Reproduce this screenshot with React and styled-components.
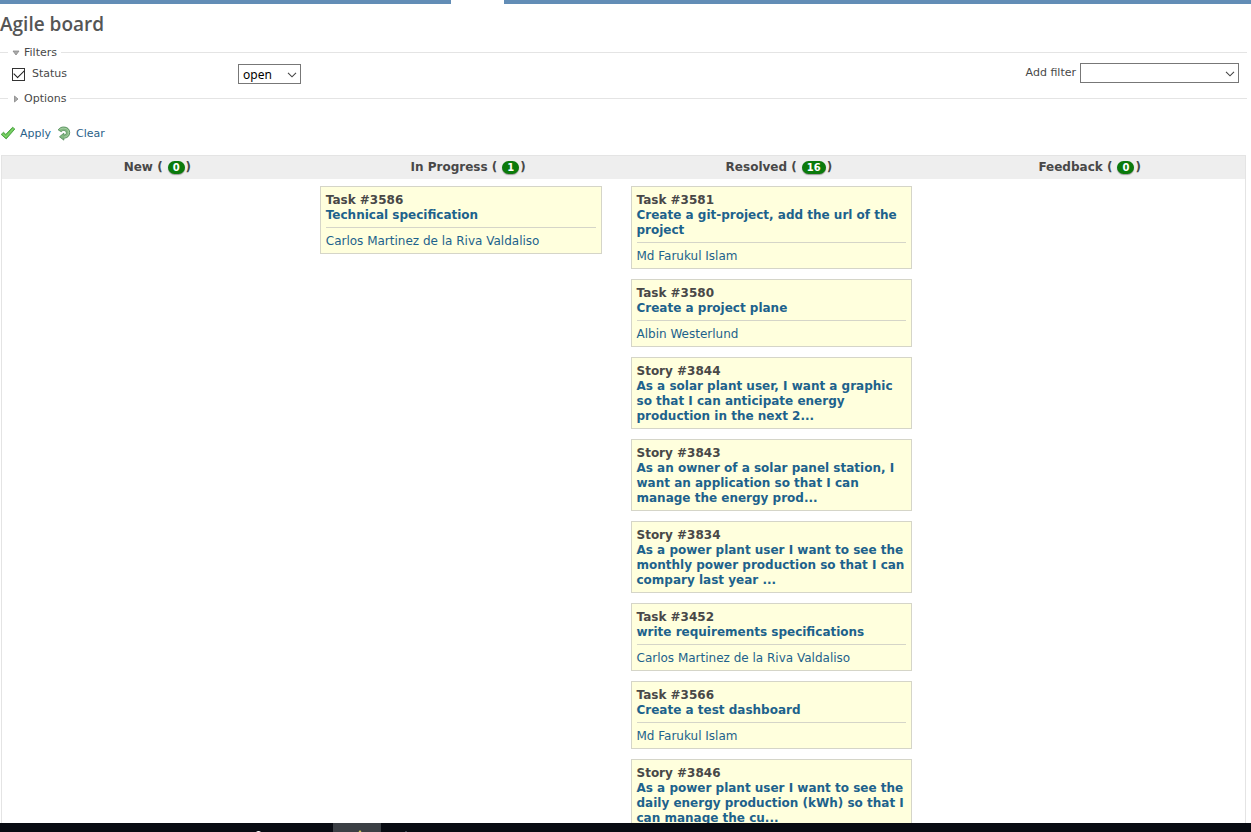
import React from "react";
import styled, { createGlobalStyle } from "styled-components";

const GlobalStyle = createGlobalStyle`
  * { box-sizing: border-box; }
  body {
    margin: 0;
    background: #fff;
    color: #484848;
    font-family: Verdana, "DejaVu Sans", sans-serif;
    font-size: 12px;
    line-height: 15px;
  }
`;

const Screen = styled.div`
  display: flex;
  flex-direction: column;
  height: 100vh;
  overflow: hidden;
`;

const TopStrip = styled.div`
  display: flex;
  flex: none;
  gap: 53px;
  height: 4px;
`;

const StripPart = styled.div`
  background: #628db6;
  flex: ${({ $fill }) => ($fill ? "1" : "0 0 451px")};
`;

const Content = styled.main`
  flex: 1;
  min-height: 0;
  overflow: hidden;
  padding: 8px 4px 0 0;
`;

const Title = styled.h1`
  margin: 0 0 9px;
  color: #555;
  font-family: "Trebuchet MS", "Open Sans", sans-serif;
  font-size: 19px;
  font-weight: 600;
  line-height: 24px;
`;

const Group = styled.fieldset`
  margin: 0;
  padding: 0 8px;
  border: 0;
  border-top: 1px solid #e4e4e4;
  min-width: 0;
  font-size: 11px;
`;

const Legend = styled.legend`
  padding: 0 4px 0 0;
`;

const Toggle = styled.button`
  display: flex;
  align-items: center;
  gap: 4px;
  padding: 1px 0 0 4px;
  border: 0;
  background: none;
  color: inherit;
  font: inherit;
  line-height: 14px;
`;

const FilterRow = styled.div`
  display: flex;
  align-items: center;
  height: 31px;
  padding: 0 0 3px 4px;
`;

const StatusLabel = styled.label`
  display: flex;
  align-items: center;
  gap: 7px;
  width: 226px;
  padding-bottom: 2px;
`;

const CheckBox = styled.input`
  appearance: none;
  width: 13px;
  height: 13px;
  margin: 2px 0 0;
  border: 1px solid #333;
  background: #fff;
  display: grid;
  place-items: center;

  &:checked::before {
    content: "";
    width: 9px;
    height: 5px;
    border: solid #222;
    border-width: 0 0 1px 1px;
    transform: rotate(-45deg) translate(1px, -1px);
  }
`;

const AddFilter = styled.div`
  display: flex;
  align-items: center;
  gap: 4px;
  margin-left: auto;
  padding-bottom: 2px;

  label { padding-bottom: 2px; }
`;

const SelectBox = styled.div`
  display: grid;
  align-items: center;
  width: ${({ $wide }) => ($wide ? "159px" : "63px")};

  & > * { grid-area: 1 / 1; }
  svg { justify-self: end; margin: 2px 4px 0 0; pointer-events: none; }
`;

const Select = styled.select`
  appearance: none;
  width: 100%;
  height: 20px;
  padding: 0 4px;
  border: 1px solid #777;
  border-radius: 0;
  background: #fff;
  color: #000;
  font-family: "Segoe UI", "Noto Sans", sans-serif;
  font-size: 12px;
`;

const Actions = styled.div`
  display: flex;
  gap: 5px;
  margin: 19px 0 14px;
  font-size: 11px;
`;

const ActionLink = styled.a`
  display: flex;
  align-items: center;
  gap: 4px;
  color: #2a5f88;
  text-decoration: none;
`;

const Board = styled.div`
  display: grid;
  grid-template-columns: repeat(4, 1fr);
  margin: 0 1px;
  border: 1px solid #e4e4e4;
`;

const Column = styled.section`
  min-width: 0;
`;

const ColumnHead = styled.h2`
  display: flex;
  align-items: center;
  justify-content: center;
  height: 23px;
  margin: 0 0 7px;
  background: #eee;
  font-size: 12px;
  line-height: 15px;
`;

const Count = styled.span`
  margin: 0 1px 0 5px;
  padding: 0 5px;
  border-radius: 7px;
  background: #0b7a0b;
  box-shadow: 0 1px 1px #999;
  color: #fff;
  font-size: 10px;
  line-height: 13px;
`;

const Cards = styled.div`
  display: grid;
  gap: 10px;
  padding: 0 22px 10px 7px;
`;

const Card = styled.article`
  padding: 6px 5px 4px;
  border: 1px solid #d5d5c8;
  background: #ffffdd;
  font-weight: bold;
`;

const CardLink = styled.a`
  display: block;
  color: #1d628c;
  text-decoration: none;
`;

const Assignee = styled.div`
  margin-top: 4px;
  padding-top: 6px;
  border-top: 1px solid #d5d5c8;
  font-weight: normal;
`;

const Taskbar = styled.footer`
  display: flex;
  flex: none;
  height: 9px;
  background: #080b12;

  svg { display: block; }
`;

const columns = [
  { name: "New", count: 0, cards: [] },
  {
    name: "In Progress",
    count: 1,
    cards: [["Task #3586", "Technical specification", "Carlos Martinez de la Riva Valdaliso"]],
  },
  {
    name: "Resolved",
    count: 16,
    cards: [
      ["Task #3581", "Create a git-project, add the url of the project", "Md Farukul Islam"],
      ["Task #3580", "Create a project plane", "Albin Westerlund"],
      ["Story #3844", "As a solar plant user, I want a graphic so that I can anticipate energy production in the next 2..."],
      ["Story #3843", "As an owner of a solar panel station, I want an application so that I can manage the energy prod..."],
      ["Story #3834", "As a power plant user I want to see the monthly power production so that I can compary last year ..."],
      ["Task #3452", "write requirements specifications", "Carlos Martinez de la Riva Valdaliso"],
      ["Task #3566", "Create a test dashboard", "Md Farukul Islam"],
      ["Story #3846", "As a power plant user I want to see the daily energy production (kWh) so that I can manage the cu..."],
    ],
  },
  { name: "Feedback", count: 0, cards: [] },
];

const Chevron = () => (
  <svg width="10" height="6" viewBox="0 0 10 6" aria-hidden="true">
    <path d="M1 .8 5 4.8 9 .8" fill="none" stroke="#444" strokeWidth="1.1" />
  </svg>
);

const Triangle = ({ open }) => (
  <svg width="8" height="8" viewBox="0 0 8 8" aria-hidden="true">
    <path d={open ? "M1 2h6L4 6Z" : "M2.5 1v6L6 4Z"} fill="#aaa" stroke="#888" strokeWidth=".8" />
  </svg>
);

const TickIcon = () => (
  <svg width="16" height="16" viewBox="0 0 16 16" aria-hidden="true">
    <path d="M1.200 9.400 3.500 7.300 5.800 9.400 12.600 2.300 14.800 4 6.200 13.900Z" fill="#66c253" stroke="#459f40" strokeWidth=".9" strokeLinejoin="round" />
    <path d="M2.600 9.100 6 11.800 13.500 3.600" fill="none" stroke="#8edc77" strokeWidth=".9" />
  </svg>
);

const ReloadIcon = () => (
  <svg width="16" height="16" viewBox="0 0 16 16" aria-hidden="true">
    <path
      d="M2.300 5C3.200 3 5.300 2 7.800 2c3.500 0 5.900 2.200 5.900 5.500 0 3.500-2.300 5.600-5.900 5.700v1.900L3.500 11.800 7.800 8.200v1.900c1.700-.1 2.500-1 2.500-2.300 0-1.500-1.100-2.300-2.700-2.300-1 0-1.700.3-2.200 1.200Z"
      fill="#83b982"
      stroke="#568f5c"
      strokeWidth=".9"
      strokeLinejoin="round"
    />
    <path d="M3.500 4.700C6 2.300 12.600 2.500 12.600 7.600c0 2.800-1.800 4.300-4.600 4.600" fill="none" stroke="#add3a9" strokeWidth=".8" />
  </svg>
);

export default function App() {
  return (
    <Screen>
      <GlobalStyle />
      <TopStrip>
        <StripPart />
        <StripPart $fill />
      </TopStrip>
      <Content>
        <Title>Agile board</Title>
        <form>
          <Group>
            <Legend>
              <Toggle type="button" aria-expanded="true"><Triangle open />Filters</Toggle>
            </Legend>
            <FilterRow>
              <StatusLabel><CheckBox type="checkbox" defaultChecked />Status</StatusLabel>
              <SelectBox>
                <Select aria-label="Status condition" defaultValue="open">
                  <option>open</option>
                </Select>
                <Chevron />
              </SelectBox>
              <AddFilter>
                <label htmlFor="add-filter">Add filter</label>
                <SelectBox $wide>
                  <Select id="add-filter"><option /></Select>
                  <Chevron />
                </SelectBox>
              </AddFilter>
            </FilterRow>
          </Group>
          <Group>
            <Legend>
              <Toggle type="button" aria-expanded="false"><Triangle />Options</Toggle>
            </Legend>
          </Group>
          <Actions>
            <ActionLink href="#apply"><TickIcon />Apply</ActionLink>
            <ActionLink href="#clear"><ReloadIcon />Clear</ActionLink>
          </Actions>
        </form>
        <Board>
          {columns.map(({ name, count, cards }) => (
            <Column key={name}>
              <ColumnHead>{name} (<Count>{count}</Count>)</ColumnHead>
              <Cards>
                {cards.map(([id, title, person]) => (
                  <Card key={id}>
                    {id}
                    <CardLink href="#issue">{title}</CardLink>
                    {person && <Assignee><CardLink href="#user">{person}</CardLink></Assignee>}
                  </Card>
                ))}
              </Cards>
            </Column>
          ))}
        </Board>
      </Content>
      <Taskbar>
        <svg width="420" height="9" viewBox="0 0 420 9" aria-hidden="true">
          <path d="M333 0h48v9h-48z" fill="#3b3f44" />
          <path d="M256 9q2.500-2 5 0Z" fill="#fff" />
          <path d="M358.500 9 360 7l1.500 2Z" fill="#d6cf62" />
          <path d="M405 8h2v1h-2z" fill="#39404c" />
        </svg>
      </Taskbar>
    </Screen>
  );
}
